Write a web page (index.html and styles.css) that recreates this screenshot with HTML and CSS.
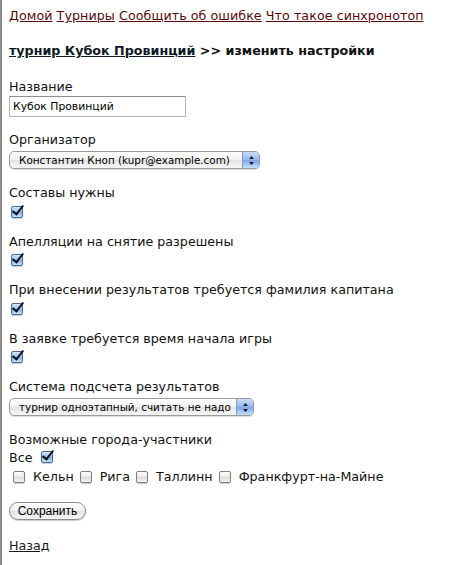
FILE: index.html
```html
<!DOCTYPE html>
<html>
<head>
<meta charset="utf-8">
<link rel="stylesheet" href="styles.css">
</head>
<body>
<nav class="nav">
  <a href="#">Домой</a> <a href="#">Турниры</a> <a href="#">Сообщить об ошибке</a> <a href="#">Что такое синхронотоп</a>
</nav>
<h1 class="title"><a href="#">турнир Кубок Провинций</a> &gt;&gt; изменить настройки</h1>
<form class="form">
  <div class="field field-name">
    <div class="label">Название</div>
    <input class="text" type="text" value="Кубок Провинций">
  </div>
  <div class="field">
    <div class="label">Организатор</div>
    <span class="select select-org"><span class="select-text">Константин Кноп (kupr@example.com)</span><span class="select-arrow"><svg width="7" height="11" viewBox="0 0 7 11"><path d="M3.5 1 L6 4 L1 4 Z M3.5 10 L6 7 L1 7 Z" fill="#1a1a2a"/></svg></span></span>
  </div>
  <div class="field">
    <div class="label">Составы нужны</div>
    <span class="cb checked"></span>
  </div>
  <div class="field">
    <div class="label">Апелляции на снятие разрешены</div>
    <span class="cb checked"></span>
  </div>
  <div class="field">
    <div class="label">При внесении результатов требуется фамилия капитана</div>
    <span class="cb checked"></span>
  </div>
  <div class="field">
    <div class="label">В заявке требуется время начала игры</div>
    <span class="cb checked"></span>
  </div>
  <div class="field">
    <div class="label">Система подсчета результатов</div>
    <span class="select select-sys"><span class="select-text">турнир одноэтапный, считать не надо</span><span class="select-arrow"><svg width="7" height="11" viewBox="0 0 7 11"><path d="M3.5 1 L6 4 L1 4 Z M3.5 10 L6 7 L1 7 Z" fill="#1a1a2a"/></svg></span></span>
  </div>
  <div class="field cities">
    <div class="label">Возможные города-участники</div>
    <div class="all">Все <span class="cb checked"></span></div>
    <div class="city-row">
      <span class="cb"></span><span class="city">Кельн</span>
      <span class="cb"></span><span class="city">Рига</span>
      <span class="cb"></span><span class="city">Таллинн</span>
      <span class="cb"></span><span class="city">Франкфурт-на-Майне</span>
    </div>
  </div>
  <div class="field">
    <button class="btn" type="button">Сохранить</button>
  </div>
</form>
<a class="back" href="#">Назад</a>
</body>
</html>
```

FILE: styles.css
```css
html {
  border-left: 2px solid #8c8c8c;
  min-height: 100%;
  box-sizing: border-box;
  background: #fff;
}
body {
  margin: 0;
  padding: 7px 7px 0 7px;
  font-family: "DejaVu Sans", Verdana, sans-serif;
  font-size: 12.7px;
  color: #111;
}
.nav {
  line-height: 18px;
  letter-spacing: 0.05px;
}
.nav a {
  color: #5a0a0a;
  text-decoration: underline;
}
.title {
  font-size: 12.7px;
  font-weight: bold;
  margin: 17px 0 0 0;
  line-height: 18px;
}
.title a {
  color: #0d1a26;
}
.form {
  margin-top: 18px;
}
.field {
  margin-bottom: 15px;
}
.field-name {
  margin-bottom: 14px;
}
.label {
  line-height: 17px;
}
.text {
  display: block;
  margin-top: 1px;
  width: 177px;
  height: 21px;
  box-sizing: border-box;
  border: 1px solid #b5b5b5;
  border-top-color: #8e8e8e;
  padding: 2px 3px;
  font-family: "DejaVu Sans", Verdana, sans-serif;
  font-size: 10.8px;
  color: #000;
}
.select {
  display: flex;
  align-items: stretch;
  margin-top: 3px;
  height: 18px;
  box-sizing: border-box;
  border: 1px solid #9a9a9a;
  border-radius: 5px;
  background: linear-gradient(#ffffff, #f0f0f0 50%, #e4e4e4 51%, #f6f6f6);
  box-shadow: 0 1px 1px rgba(0,0,0,0.15);
  overflow: hidden;
  font-size: 10.4px;
  color: #000;
}
.select-org { width: 251px; }
.select-sys { width: 245px; }
.select-text {
  flex: 1;
  padding-left: 9px;
  line-height: 16px;
  white-space: nowrap;
  overflow: hidden;
}
.select-arrow {
  width: 16px;
  flex: none;
  border-left: 1px solid #8a9ab8;
  background: linear-gradient(#c9dcf7, #93b7ec 50%, #7ba5e8 51%, #bfe0fb);
  display: flex;
  align-items: center;
  justify-content: center;
}
.cb {
  display: inline-block;
  width: 12px;
  height: 12px;
  box-sizing: border-box;
  border: 1px solid #7f7f7f;
  border-radius: 2px;
  background: linear-gradient(#fdfdfd, #e9e9e9 50%, #dcdcdc 51%, #f3f3f3);
  box-shadow: 0 1px 1px rgba(0,0,0,0.2);
  position: relative;
  vertical-align: middle;
}
.cb.checked {
  border-color: #4a67a0;
  background: linear-gradient(#d5e6fb, #9cc0f0 50%, #7fa9e9 51%, #c2e2fd);
}
.cb.checked::after {
  content: "";
  position: absolute;
  left: 3px;
  top: -4px;
  width: 4px;
  height: 10px;
  border-right: 2px solid #111;
  border-bottom: 2px solid #111;
  transform: rotate(38deg);
}
.field > .cb {
  margin-top: 4px;
  margin-left: 2px;
}
.cities .all {
  line-height: 17px;
  margin-top: 1px;
}
.cities .all .cb {
  margin-left: 4px;
  margin-top: -3px;
}
.city-row {
  display: flex;
  align-items: center;
  margin-top: 3px;
  padding-left: 4px;
}
.city {
  margin: 0 6px 0 8px;
}
.btn {
  margin-top: 3px;
  height: 18px;
  width: 77px;
  border: 1px solid #8a8a8a;
  border-radius: 9px;
  background: linear-gradient(#ffffff, #f2f2f2 50%, #e2e2e2 51%, #f7f7f7);
  box-shadow: 0 1px 1px rgba(0,0,0,0.2);
  font-family: "Liberation Sans", Arial, sans-serif;
  font-size: 12px;
  padding: 0;
  color: #000;
}
.back {
  display: inline-block;
  margin-top: 3px;
  color: #1a1a1a;
}
```
